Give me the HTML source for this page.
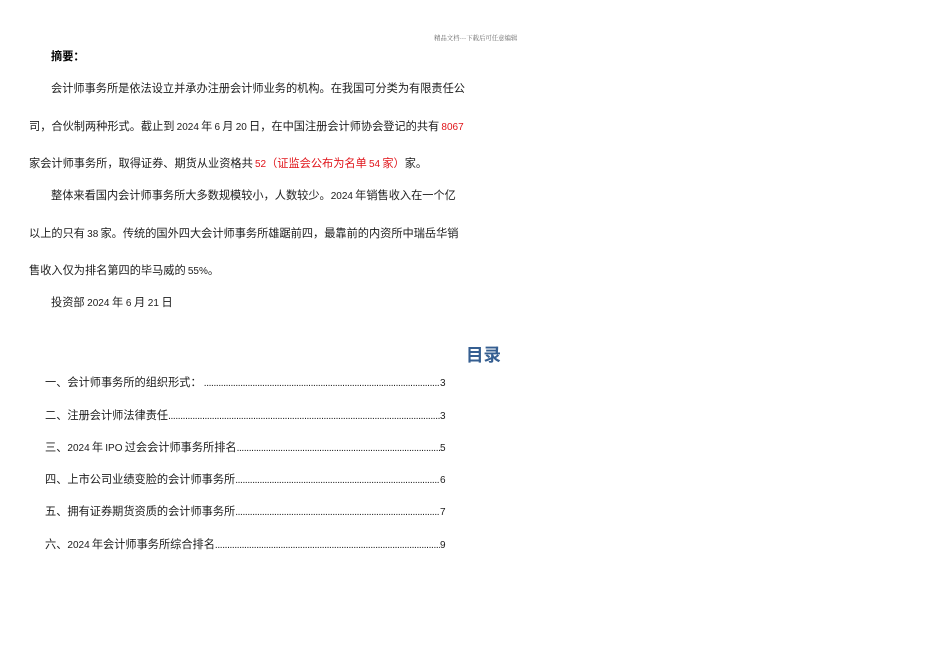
<!DOCTYPE html>
<html lang="zh"><head><meta charset="utf-8">
<style>
html,body{margin:0;padding:0;background:#fff}
body{width:950px;height:672px;position:relative;overflow:hidden;font-family:"Liberation Sans","Noto Sans CJK SC",sans-serif;color:#1c1c1c}
.l{position:absolute;white-space:nowrap;font-size:11.2px;line-height:14px;height:14px;filter:blur(.25px);font-family:"Noto Sans CJK SC",sans-serif;word-spacing:-.3px}
.l i{font-style:normal;font-family:"Liberation Sans",sans-serif;font-size:10px}
.r{color:#e0141a}
.t{display:flex;align-items:baseline;left:45px;width:401px}
.t b{font-weight:400;flex:none}
.t u{flex:1;overflow:hidden;height:14px;text-decoration:none;font-family:"Liberation Sans",sans-serif;font-size:10px;letter-spacing:-.35px;color:#111}
.t em{font-style:normal;flex:none;font-family:"Liberation Sans",sans-serif;font-size:10px;width:6px}
</style></head><body>
<div class="l" style="left:434px;top:31px;font-size:6.4px;color:#666;font-family:'Noto Serif CJK SC',serif">精品文档---下载后可任意编辑</div>
<div class="l" style="left:51px;top:49px;font-weight:700;color:#000">摘要&#xFF1A;</div>
<div class="l" style="left:51px;top:81px">会计师事务所是依法设立并承办注册会计师业务的机构。在我国可分类为有限责任公</div>
<div class="l" style="left:29px;top:119px">司&#xFF0C;合伙制两种形式。截止到 <i>2024</i> 年 <i>6</i> 月 <i>20</i> 日&#xFF0C;在中国注册会计师协会登记的共有 <span class="r"><i>8067</i></span></div>
<div class="l" style="left:29px;top:156px">家会计师事务所&#xFF0C;取得证券、期货从业资格共 <span class="r"><i>52</i>&#xFF08;证监会公布为名单 <i>54</i> 家&#xFF09;</span>家。</div>
<div class="l" style="left:51px;top:188px">整体来看国内会计师事务所大多数规模较小&#xFF0C;人数较少。<i>2024</i> 年销售收入在一个亿</div>
<div class="l" style="left:29px;top:226px">以上的只有 <i>38</i> 家。传统的国外四大会计师事务所雄踞前四&#xFF0C;最靠前的内资所中瑞岳华销</div>
<div class="l" style="left:29px;top:263px">售收入仅为排名第四的毕马威的 <i>55%</i>。</div>
<div class="l" style="left:51px;top:295px;word-spacing:.1px">投资部 <i>2024</i> 年 <i>6</i> 月 <i>21</i> 日</div>
<div class="l" style="left:466px;top:344px;height:22px;line-height:22px;font-size:17.5px;font-weight:700;color:#365f91">目录</div>
<div class="l t" style="top:375px"><b>一、会计师事务所的组织形式&#xFF1A;</b><u>&nbsp;........................................................................................................................................</u><em>3</em></div>
<div class="l t" style="top:408px"><b>二、注册会计师法律责任</b><u>........................................................................................................................................</u><em>3</em></div>
<div class="l t" style="top:440px"><b>三、<i>2024</i> 年 <i>IPO</i> 过会会计师事务所排名</b><u>........................................................................................................................................</u><em>5</em></div>
<div class="l t" style="top:472px"><b>四、上市公司业绩变脸的会计师事务所</b><u>........................................................................................................................................</u><em>6</em></div>
<div class="l t" style="top:504px"><b>五、拥有证券期货资质的会计师事务所</b><u>........................................................................................................................................</u><em>7</em></div>
<div class="l t" style="top:537px"><b>六、<i>2024</i> 年会计师事务所综合排名</b><u>........................................................................................................................................</u><em>9</em></div>
</body></html>
